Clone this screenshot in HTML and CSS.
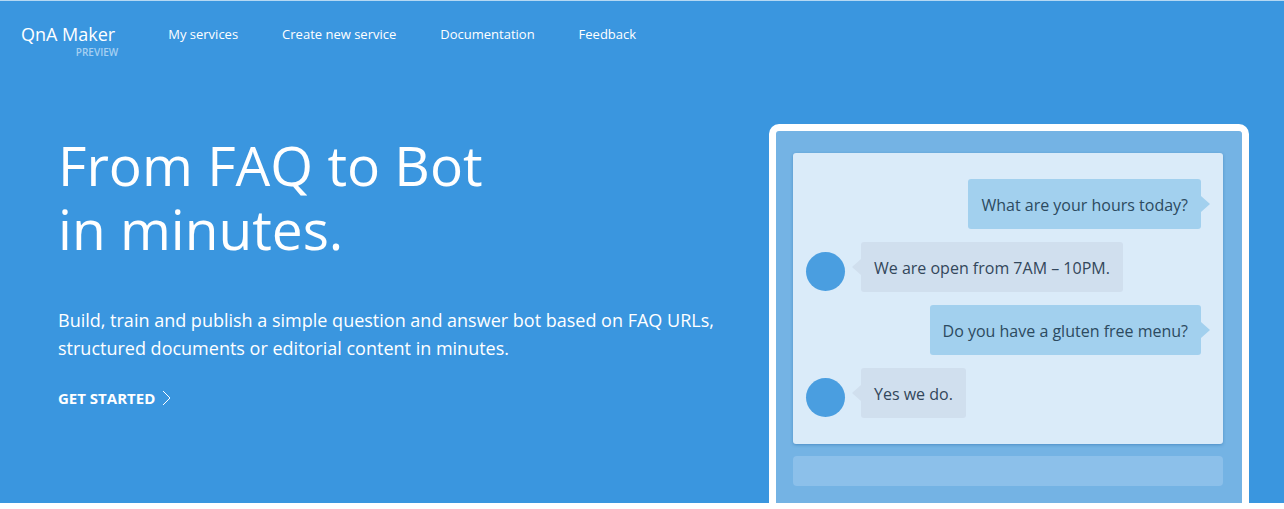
FILE: index.html
```html
<!DOCTYPE html>
<html lang="en">
<head>
    <meta charset="UTF-8">
    <meta name="viewport" content="width=device-width, initial-scale=1.0">
    <title>QnA Maker</title>
    <link rel="stylesheet" href="styles.css">
</head>
<body>
    <div class="page">
        <header class="header">
            <a class="brand" href="#">
                <span class="brand-name">QnA Maker</span>
                <span class="brand-tag">PREVIEW</span>
            </a>
            <nav class="nav">
                <a href="#">My services</a>
                <a href="#">Create new service</a>
                <a href="#">Documentation</a>
                <a href="#">Feedback</a>
            </nav>
        </header>

        <main class="hero">
            <section class="intro">
                <h1>From FAQ to Bot<br>in minutes.</h1>
                <p>Build, train and publish a simple question and answer bot based on FAQ URLs,<br>structured documents or editorial content in minutes.</p>
                <a class="get-started" href="#">
                    GET STARTED
                    <svg width="9" height="16" viewBox="0 0 9 16" aria-hidden="true">
                        <path d="M1 1l7 7-7 7" fill="none" stroke="currentColor"/>
                    </svg>
                </a>
            </section>

            <section class="device">
                <div class="chat">
                    <div class="message user">
                        <div class="bubble">What are your hours today?</div>
                    </div>
                    <div class="message bot">
                        <span class="avatar"></span>
                        <div class="bubble">We are open from 7AM – 10PM.</div>
                    </div>
                    <div class="message user">
                        <div class="bubble">Do you have a gluten free menu?</div>
                    </div>
                    <div class="message bot">
                        <span class="avatar"></span>
                        <div class="bubble">Yes we do.</div>
                    </div>
                </div>
                <input class="chat-input" type="text" aria-label="Message">
            </section>
        </main>
    </div>
</body>
</html>
```
FILE: styles.css
```css
* {
    box-sizing: border-box;
}
body {
    margin: 0;
    font-family: "Segoe UI", "Open Sans", "Noto Sans", sans-serif;
    background-color: white;
    color: white;
}
a {
    color: white;
    text-decoration: none;
}
.page {
    background-color: #3a96df;
    border-top: 1px solid #b5d8f3;
}

/* Header */
.header {
    display: flex;
    align-items: flex-start;
    gap: 50px;
    padding: 22px 21px 0;
}
.brand {
    display: flex;
    flex-direction: column;
}
.brand-name {
    font-size: 18px;
    line-height: 22px;
    padding-right: 3px;
}
.brand-tag {
    align-self: flex-end;
    font-size: 10px;
    font-weight: 600;
    line-height: 14px;
    color: #a5d0f2;
}
.nav {
    display: flex;
    gap: 44px;
    font-size: 13px;
    line-height: 22px;
}

/* Hero */
.hero {
    display: flex;
    justify-content: space-between;
    align-items: flex-start;
    padding: 65px 35px 0 58px;
}
.intro {
    padding-top: 9px;
}
h1 {
    margin: 0;
    font-size: 55px;
    font-weight: 400;
    line-height: 64px;
}
.intro p {
    margin: 45px 0 26px;
    font-size: 18px;
    line-height: 28px;
    white-space: nowrap;
}
.get-started {
    display: flex;
    align-items: center;
    gap: 7px;
    font-size: 15px;
    font-weight: 700;
    line-height: 20px;
}

/* Chat preview */
.device {
    flex: 0 0 480px;
    padding: 22px 19px 17px 17px;
    background-color: #74b3e4;
    border: 7px solid white;
    border-bottom: none;
    border-radius: 10px 10px 0 0;
}
.chat {
    display: flex;
    flex-direction: column;
    gap: 13px;
    padding: 26px 22px 26px 13px;
    background-color: #daebf9;
    border-radius: 3px;
    box-shadow: 0 1px 3px rgba(40, 110, 170, 0.5);
}
.message {
    display: flex;
    align-items: center;
    gap: 16px;
}
.message.user {
    justify-content: flex-end;
}
.avatar {
    width: 39px;
    height: 39px;
    margin-top: 9px;
    border-radius: 50%;
    background-color: #4a9ee0;
}
.bubble {
    position: relative;
    padding: 14px 13px 12px;
    font-size: 16px;
    line-height: 24px;
    color: #33475b;
    background-color: #d0dfee;
    border-radius: 3px;
}
.user .bubble {
    color: #2c4a60;
    background-color: #a2d0ee;
}
.bubble::after {
    content: "";
    position: absolute;
    top: 17px;
    right: 100%;
    border: 8px solid transparent;
    border-left-width: 0;
    border-right: 9px solid #d0dfee;
}
.user .bubble::after {
    right: auto;
    left: 100%;
    border-right-width: 0;
    border-left: 9px solid #a2d0ee;
}
.chat-input {
    display: block;
    width: 100%;
    height: 30px;
    margin-top: 12px;
    padding: 0 10px;
    background-color: #8cc0ea;
    border: none;
    border-radius: 4px;
}
```
